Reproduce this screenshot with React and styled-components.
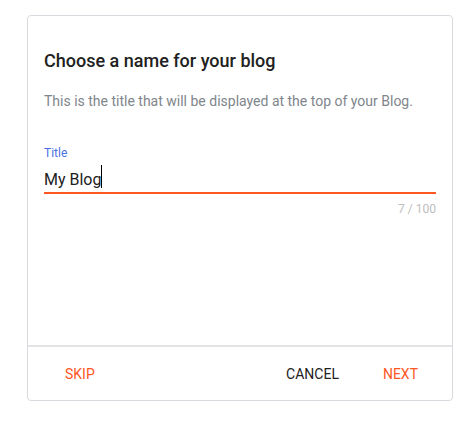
import React from 'react'
import styled, { createGlobalStyle } from 'styled-components'

const GlobalStyle = createGlobalStyle`
  body {
    margin: 0;
    background: #fff;
    font-family: Roboto, "Noto Sans", Arial, sans-serif;
  }
`

const Page = styled.div`
  padding: 15px 0 0 27px;
`

const Card = styled.div`
  width: 424px;
  border: 1px solid #d6dadf;
  border-radius: 4px;
  background: #fff;
  display: flex;
  flex-direction: column;
`

const Body = styled.div`
  height: 296px;
  padding: 33px 16px 0;
  display: flex;
  flex-direction: column;
`

const Heading = styled.h2`
  margin: 0;
  font-size: 18px;
  line-height: 24px;
  font-weight: 500;
  color: #212121;
`

const Hint = styled.p`
  margin: 18px 0 0;
  font-size: 14px;
  line-height: 20px;
  color: #80868b;
`

const Field = styled.label`
  margin-top: 34px;
  display: flex;
  flex-direction: column;
`

const Label = styled.span`
  font-size: 12px;
  line-height: 16px;
  color: #4a6fe3;
`

const InputWrap = styled.div`
  position: relative;
  margin-top: 7px;
  display: flex;
`

const Input = styled.input`
  flex: 1;
  height: 24px;
  padding: 0;
  border: none;
  border-bottom: 2px solid #ff5722;
  outline: none;
  font-family: inherit;
  font-size: 16px;
  line-height: 24px;
  color: #212121;
  caret-color: transparent;
  background: transparent;
`

const Caret = styled.span`
  position: absolute;
  top: -3px;
  left: 57px;
  width: 1px;
  height: 23px;
  background: #000;
  pointer-events: none;
`

const Counter = styled.span`
  margin-top: 7px;
  align-self: flex-end;
  font-size: 12px;
  line-height: 16px;
  color: #bdbdbd;
`

const Footer = styled.div`
  height: 53px;
  border-top: 2px solid #e2e4e6;
  display: flex;
  align-items: center;
  padding: 0 12px 0 15px;
`

const Spacer = styled.div`
  flex: 1;
`

const TextButton = styled.button`
  height: 36px;
  padding: 0 22px;
  border: none;
  background: transparent;
  font-family: inherit;
  font-size: 14px;
  font-weight: 400;
  text-transform: uppercase;
  color: ${p => (p.$accent ? '#ff5722' : '#212121')};
  cursor: pointer;
`

export default function App() {
  return (
    <Page>
      <GlobalStyle />
      <Card>
        <Body>
          <Heading>Choose a name for your blog</Heading>
          <Hint>This is the title that will be displayed at the top of your Blog.</Hint>
          <Field>
            <Label>Title</Label>
            <InputWrap>
              <Input defaultValue="My Blog" maxLength={100} />
              <Caret />
            </InputWrap>
          </Field>
          <Counter>7 / 100</Counter>
        </Body>
        <Footer>
          <TextButton $accent>Skip</TextButton>
          <Spacer />
          <TextButton>Cancel</TextButton>
          <TextButton $accent>Next</TextButton>
        </Footer>
      </Card>
    </Page>
  )
}
